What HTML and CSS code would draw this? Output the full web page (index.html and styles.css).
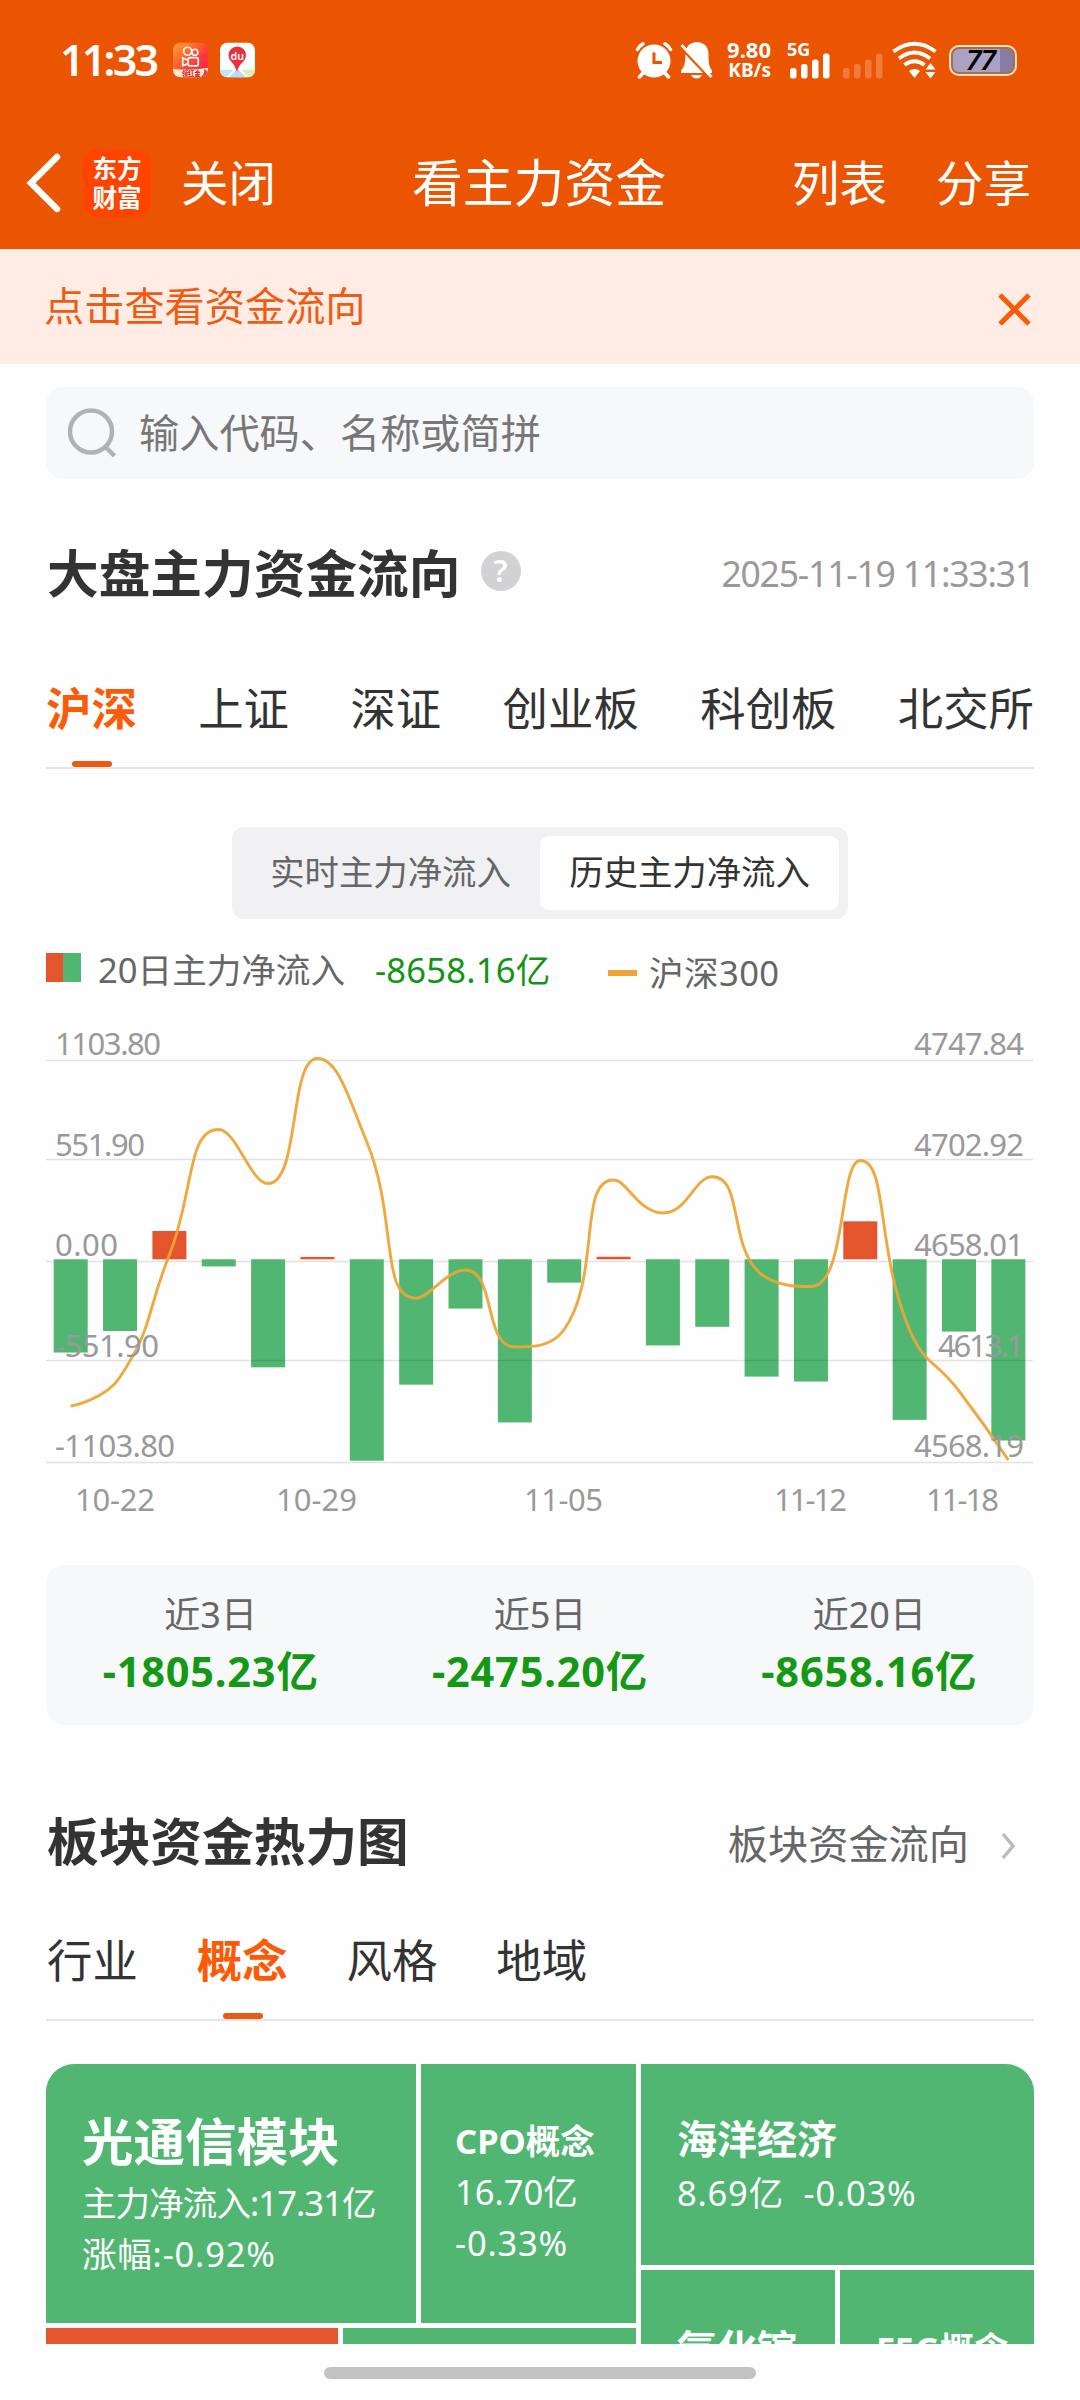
FILE: index.html
```html
<!DOCTYPE html>
<html lang="zh-CN">

<head>
    <meta charset="UTF-8">
    <meta name="viewport" content="width=device-width, initial-scale=1.0">
    <title>看主力资金</title>
    <link rel="stylesheet" href="styles.css">
</head>

<body>
    <header class="header">
        <div class="status">
            <div class="status-left">
                <span class="time">11:33</span>
                <svg class="app-icon" viewBox="0 0 36 36">
                    <defs>
                        <linearGradient id="ks" x1="0" y1="0" x2="1" y2="1">
                            <stop offset="0" stop-color="#ffa726" />
                            <stop offset=".6" stop-color="#ff3b3b" />
                            <stop offset="1" stop-color="#f0244c" />
                        </linearGradient>
                        <clipPath id="round"><rect width="36" height="36" rx="8" /></clipPath>
                    </defs>
                    <g clip-path="url(#round)">
                        <rect width="36" height="36" fill="url(#ks)" />
                        <g fill="none" stroke="#fff" stroke-width="1.7">
                            <circle cx="15" cy="9" r="4.1" />
                            <circle cx="22.5" cy="10" r="3.1" />
                            <rect x="15.5" y="15.5" width="10.5" height="8.5" rx="2.2" />
                            <path d="M15 18l-5-2v8l5-2" />
                        </g>
                        <path d="M0 27q18 2.5 36-1v10H0z" fill="#ffe9cf" />
                        <text x="9" y="34.5" class="app-tag">领红金</text>
                        <path d="M28 36q5-3 4-9 5 2 4 9z" fill="#f33b3b" />
                    </g>
                </svg>
                <svg class="app-icon" viewBox="0 0 36 36">
                    <g clip-path="url(#round)">
                        <rect width="36" height="36" fill="#fff" />
                        <path d="M0 28h14L6 36H0z" fill="#bfe3f7" />
                        <path d="M18 27l9 9H9z" fill="#b9dcf5" />
                        <path d="M22 28h14v8h-6z" fill="#d9efb8" />
                        <path d="M17.500 30Q16 24 11.500 19.500A9 9 0 1 1 24 19.500Q19 24 17.500 30z" fill="#e8303a" />
                        <text x="17.800" y="17.500" class="app-du">du</text>
                    </g>
                </svg>
            </div>
            <div class="status-right">
                <svg class="alarm" width="38" height="38" viewBox="0 0 38 38">
                    <circle cx="19" cy="20" r="16.500" fill="#fff" />
                    <g fill="none" stroke="#fff" stroke-width="3.500" stroke-linecap="round">
                        <path d="M2.500 8.500Q4.500 5 8 2.800M35.500 8.500Q33.500 5 30 2.800M8 32l-3.500 4M30 32l3.500 4" />
                    </g>
                    <path d="M19 11.500v10h8" fill="none" stroke="#eb5502" stroke-width="3" />
                </svg>
                <svg class="bell" width="34" height="38" viewBox="0 0 34 38">
                    <path d="M17 1C10 1 5.500 6 5.500 12.500c0 9-1 13-4.500 17V32h31v-2.500C29 26 28.500 21 28.500 12.500 28.500 6 24 1 17 1zM11 34h11q-2 3.500-5.500 3.500T11 34z" fill="#fff" />
                    <path d="M-1 4L30 37" stroke="#eb5502" stroke-width="3.500" />
                    <path d="M1.500 4L31.500 36" stroke="#fff" stroke-width="2.800" />
                </svg>
                <div class="speed"><span>9.80</span><span>KB/s</span></div>
                <svg class="signal" width="90" height="38" viewBox="0 0 90 38">
                    <text x="0" y="14.500" class="net">5G</text>
                    <g fill="#fff">
                        <rect x="3" y="27" width="6.500" height="10.500" rx="2.500" />
                        <rect x="14" y="23" width="6.500" height="14.500" rx="2.500" />
                        <rect x="25" y="18.500" width="6.500" height="19" rx="2.500" />
                        <rect x="36" y="12.500" width="6.500" height="25" rx="2.500" />
                    </g>
                    <g fill="#f27a3a">
                        <rect x="56" y="27" width="6.500" height="10.500" rx="2.500" />
                        <rect x="67" y="23" width="6.500" height="14.500" rx="2.500" />
                        <rect x="78" y="18.500" width="6.500" height="19" rx="2.500" />
                    </g>
                </svg>
                <svg class="signal-end" width="7" height="38" viewBox="0 0 7 38">
                    <rect x="0" y="12.500" width="6.500" height="25" rx="2.500" fill="#f27a3a" />
                </svg>
                <svg class="wifi" width="46" height="38" viewBox="0 0 46 38">
                    <g fill="none" stroke="#fff" stroke-width="4">
                        <path d="M1.500 10.500Q22.500-5 43.500 10.500" />
                        <path d="M7 17.500Q22.500 5.500 38 17.500" />
                        <path d="M12.500 24Q22.500 16.500 32.500 24" />
                    </g>
                    <path d="M17 30q5.500-4 11 0l-5.500 7z" fill="#fff" />
                    <path d="M38.500 22l5 6.500h-10zM38.500 37.500l5-6.500h-10z" fill="#fff" />
                </svg>
                <div class="battery"><div class="battery-body">77</div></div>
            </div>
        </div>
        <nav class="nav">
            <svg class="back" width="36" height="60" viewBox="0 0 36 60">
                <path d="M31 4L5 30l26 26" fill="none" stroke="#fff" stroke-width="6.500" stroke-linecap="round" />
            </svg>
            <div class="logo"><span>东方</span><span>财富</span></div>
            <span class="close-page">关闭</span>
            <span class="nav-title">看主力资金</span>
            <span class="nav-list">列表</span>
            <span class="nav-share">分享</span>
        </nav>
    </header>

    <div class="notice">
        <span>点击查看资金流向</span>
        <svg width="34" height="34" viewBox="0 0 34 34">
            <path d="M2 2l29 29M31 2L2 31" stroke="#fb5a07" stroke-width="5" />
        </svg>
    </div>

    <main class="main">
        <div class="search">
            <svg width="48" height="50" viewBox="0 0 48 50">
                <circle cx="23" cy="23.500" r="21" fill="none" stroke="#b2b2b2" stroke-width="4.500" />
                <path d="M37 38.500l9.500 9.500" stroke="#b2b2b2" stroke-width="4.500" />
            </svg>
            <span>输入代码、名称或简拼</span>
        </div>

        <div class="section-head market-head">
            <h2>大盘主力资金流向</h2>
            <span class="help">?</span>
            <span class="date">2025-11-19 11:33:31</span>
        </div>

        <div class="tabs market-tabs">
            <span class="tab active">沪深</span>
            <span class="tab">上证</span>
            <span class="tab">深证</span>
            <span class="tab">创业板</span>
            <span class="tab">科创板</span>
            <span class="tab">北交所</span>
        </div>

        <div class="segment">
            <span class="seg">实时主力净流入</span>
            <span class="seg seg-on">历史主力净流入</span>
        </div>

        <div class="legend">
            <i class="swatch"></i>
            <span class="legend-name">20日主力净流入</span>
            <span class="legend-value">-8658.16亿</span>
            <i class="dash"></i>
            <span class="legend-index">沪深300</span>
        </div>

        <svg class="chart" width="988" height="500" viewBox="0 0 988 500">
            <path class="grid" d="M0 241.500H987" />
            <g id="bars"></g>
            <path class="grid" d="M0 40.500H987M0 139.500H987M0 340.500H987M0 442.500H987" />
            <path id="line" class="line" />
            <g class="axis">
                <text x="9" y="34.500" textLength="106">1103.80</text>
                <text x="9" y="136" textLength="90">551.90</text>
                <text x="9" y="235.500" textLength="63">0.00</text>
                <text x="9" y="337" textLength="104">-551.90</text>
                <text x="9" y="437" textLength="120">-1103.80</text>
            </g>
            <g class="axis">
                <text x="868" y="34.500" textLength="110">4747.84</text>
                <text x="868" y="136" textLength="110">4702.92</text>
                <text x="868" y="235.500" textLength="110">4658.01</text>
                <text x="892" y="337" textLength="86">4613.1</text>
                <text x="868" y="437" textLength="110">4568.19</text>
            </g>
            <g class="axis">
                <text x="29" y="491" textLength="80">10-22</text>
                <text x="230" y="491" textLength="81">10-29</text>
                <text x="478" y="491" textLength="79">11-05</text>
                <text x="728" y="491" textLength="73">11-12</text>
                <text x="880" y="491" textLength="73">11-18</text>
            </g>
        </svg>

        <div class="summary">
            <div class="sum-item"><span>近3日</span><b>-1805.23亿</b></div>
            <div class="sum-item"><span>近5日</span><b>-2475.20亿</b></div>
            <div class="sum-item"><span>近20日</span><b>-8658.16亿</b></div>
        </div>

        <div class="section-head heat-head">
            <h2>板块资金热力图</h2>
            <span class="more">板块资金流向</span>
            <svg class="arrow" width="16" height="28" viewBox="0 0 16 28">
                <path d="M3 2l10 12L3 26" fill="none" stroke="#bbb" stroke-width="3.500" />
            </svg>
        </div>

        <div class="tabs heat-tabs">
            <span class="tab">行业</span>
            <span class="tab active">概念</span>
            <span class="tab">风格</span>
            <span class="tab">地域</span>
        </div>

        <div class="heatmap">
            <div class="heat-left">
                <div class="heat-row">
                    <div class="cell cell-xl">
                        <strong>光通信模块</strong>
                        <span>主力净流入:17.31亿</span>
                        <span class="rate">涨幅:-0.92%</span>
                    </div>
                    <div class="cell cell-cpo">
                        <strong>CPO概念</strong>
                        <span>16.70亿</span>
                        <span class="rate">-0.33%</span>
                    </div>
                </div>
                <div class="heat-row">
                    <div class="cell cell-up"></div>
                    <div class="cell cell-rest"></div>
                </div>
            </div>
            <div class="heat-right">
                <div class="cell cell-sea">
                    <strong>海洋经济</strong>
                    <span class="rate">8.69亿&nbsp; -0.03%</span>
                </div>
                <div class="heat-row">
                    <div class="cell cell-half"><strong>氧化镓</strong></div>
                    <div class="cell cell-half cell-f5g"><strong>F5G概念</strong></div>
                </div>
            </div>
        </div>
    </main>

    <div class="home-bar"></div>

    <script src="chart.js"></script>
</body>

</html>
```
FILE: styles.css
```css
* {
    box-sizing: border-box;
}

body {
    margin: 0;
    width: 1080px;
    height: 2400px;
    overflow: hidden;
    background: #fefefe;
    color: #333;
    font-family: "Noto Sans", "Noto Sans CJK SC", sans-serif;
    white-space: nowrap;
}

svg {
    display: block;
    flex: none;
}

/* 顶部 */
.header {
    height: 249px;
    background: #eb5502;
    color: #fff;
}

.status {
    display: flex;
    justify-content: space-between;
    height: 120px;
    padding: 0 63px 0 60px;
}

.status-left,
.status-right {
    display: flex;
    align-items: center;
}

.time {
    width: 113px;
    font-size: 43px;
    font-weight: 600;
    line-height: 60px;
    letter-spacing: -2.8px;
}

.app-icon {
    width: 35px;
    height: 36px;
    margin-right: 12px;
}

.app-tag {
    font-size: 6.5px;
    font-weight: 700;
    fill: #c4161c;
}

.app-du {
    font-size: 11px;
    font-weight: 600;
    fill: #fff;
    text-anchor: middle;
}

.bell {
    margin-left: 7px;
}

.speed {
    display: flex;
    flex-direction: column;
    width: 46px;
    margin: 0 16px 0 11px;
    font-size: 22px;
    font-weight: 700;
    line-height: 21px;
    text-align: right;
}

.speed span + span {
    font-size: 19px;
}

.net {
    font-size: 18px;
    font-weight: 700;
    fill: #fff;
}

.signal {
    margin-right: -1px;
    overflow: visible;
}

.wifi {
    margin-left: 9px;
}

.battery {
    width: 68px;
    height: 31px;
    margin-left: 11px;
    padding: 2px;
    border: 2px solid #ffe6c0;
    border-radius: 10px;
    background: #b0694a;
}

.battery-body {
    height: 100%;
    border-radius: 6px;
    background: linear-gradient(90deg, #aaa2c5 78%, #857da3 78%);
    color: #000;
    font-family: Inter, sans-serif;
    font-size: 27px;
    font-style: italic;
    font-weight: 600;
    line-height: 23px;
    padding-left: 13px;
    letter-spacing: -1.5px;
}

.nav {
    display: flex;
    align-items: center;
    height: 125px;
    padding-left: 26px;
    font-size: 47.5px;
    line-height: 60px;
}

.logo {
    display: flex;
    flex-direction: column;
    align-items: center;
    justify-content: center;
    width: 68px;
    height: 68px;
    margin-left: 21px;
    border-radius: 14px;
    background: #ff4400;
    font-size: 24.5px;
    font-weight: 700;
    line-height: 29px;
}

.close-page {
    width: 231px;
    margin-left: 30px;
}

.nav-title {
    width: 380px;
    font-size: 50.8px;
}

.nav-list {
    width: 144px;
}

/* 提示条 */
.notice {
    display: flex;
    justify-content: space-between;
    height: 115px;
    padding: 28px 48px 0 44px;
    background: #ffede5;
    color: #ee5c14;
    font-size: 40.2px;
    line-height: 58px;
}

.notice svg {
    margin-top: 16px;
}

.main {
    height: 1980px;
    padding: 23px 46px 0;
    overflow: hidden;
}

.search {
    display: flex;
    align-items: center;
    height: 92px;
    padding-left: 22px;
    border-radius: 17px;
    background: #f7f8fa;
    color: #777;
    font-size: 40.2px;
    line-height: 60px;
}

.search span {
    margin-left: 23px;
}

.section-head {
    display: flex;
    align-items: center;
    height: 70px;
}

.section-head h2 {
    margin: 0 0 0 1px;
    font-size: 51.7px;
    font-weight: 700;
    line-height: 70px;
}

.market-head {
    margin-top: 59px;
}

.help {
    width: 40px;
    height: 40px;
    margin: -4px 0 0 20px;
    border-radius: 50%;
    background: #d2d2d4;
    color: #fff;
    font-size: 30px;
    font-weight: 600;
    line-height: 40px;
    text-align: center;
}

.date {
    margin-left: auto;
    color: #999;
    font-size: 35.5px;
    letter-spacing: -1.2px;
}

.tabs {
    display: flex;
    border-bottom: 2px solid #e6e6e6;
    font-size: 45.4px;
    line-height: 66px;
}

.market-tabs {
    justify-content: space-between;
    height: 94px;
    margin-top: 67px;
}

.tab {
    position: relative;
}

.active {
    color: #fb5a07;
    font-weight: 700;
}

.active::after {
    content: "";
    position: absolute;
    left: 50%;
    bottom: 0;
    width: 40px;
    height: 6px;
    margin-left: -19px;
    border-radius: 3px;
    background: #eb5a14;
}

/* 切换 */
.segment {
    display: flex;
    width: 616px;
    height: 92px;
    margin: 58px auto 0;
    padding: 9px;
    border-radius: 12px;
    background: #f1f1f4;
    font-size: 34.4px;
    line-height: 72px;
    text-align: center;
}

.seg {
    flex: 1;
    color: #666;
}

.seg-on {
    border-radius: 9px;
    background: #fff;
    color: #333;
}

.legend {
    display: flex;
    align-items: center;
    height: 60px;
    margin-top: 21px;
    color: #666;
    font-size: 34.6px;
    line-height: 60px;
}

.swatch {
    width: 35px;
    height: 29px;
    margin-top: -5px;
    background: linear-gradient(90deg, #e5552d 48%, #51b672 48%);
}

.legend-name {
    width: 277px;
    margin-left: 17px;
}

.legend-value {
    width: 233px;
    color: #149414;
    letter-spacing: 0.2px;
}

.dash {
    width: 29px;
    height: 6px;
    margin-top: 6px;
    background: #eda536;
}

.legend-index {
    margin: 6px 0 0 12px;
    letter-spacing: 0.4px;
}

/* 图表 */
.chart {
    margin-top: 20px;
}

.grid {
    stroke: rgba(0, 0, 0, 0.11);
    stroke-width: 1.4;
}

.bar-up {
    fill: #e5552d;
}

.bar-down {
    fill: #51b672;
}

.line {
    fill: none;
    stroke: #eda536;
    stroke-width: 2.9;
    opacity: 0.95;
}

.axis {
    fill: #999;
    font-size: 31px;
}

.summary {
    display: grid;
    grid-template-columns: repeat(3, 1fr);
    height: 160px;
    margin-top: 45px;
    padding-top: 22px;
    border-radius: 19px;
    background: #f7f8fa;
}

.sum-item {
    display: flex;
    flex-direction: column;
    align-items: center;
    color: #666;
    font-size: 36px;
    line-height: 56px;
}

.sum-item b {
    color: #149914;
    font-size: 41.5px;
    letter-spacing: 0.8px;
}

/* 热力图 */
.heat-head {
    margin-top: 81px;
}

.more {
    margin-left: auto;
    color: #666;
    font-size: 40.2px;
}

.arrow {
    margin: 10px 18px 0 31px;
}

.heat-tabs {
    gap: 59px;
    height: 94px;
    margin-top: 51px;
    padding-left: 1px;
}

.heatmap {
    display: flex;
    gap: 5px;
    height: 500px;
    margin-top: 43px;
    border-radius: 28px;
    overflow: hidden;
}

.heat-left {
    width: 590px;
}

.heat-right {
    width: 393px;
}

.heat-row {
    display: flex;
    gap: 5px;
    margin-bottom: 5px;
}

.cell {
    display: flex;
    flex-direction: column;
    height: 259px;
    background: #51b672;
    color: #fff;
    font-size: 34.5px;
    line-height: 51px;
    padding-left: 36px;
}

.cell-xl {
    width: 370px;
    padding-top: 41px;
}

.cell-xl strong {
    font-size: 51.5px;
    line-height: 72px;
}

.cell-xl span {
    letter-spacing: -0.9px;
}

.cell .rate {
    letter-spacing: 0.8px;
}

.cell-cpo {
    width: 215px;
    padding-top: 51px;
    padding-left: 34px;
}

.cell-up {
    width: 292px;
    background: #e5552d;
}

.cell-rest {
    width: 293px;
}

.cell-sea {
    height: 201px;
    margin-bottom: 5px;
    padding-top: 46px;
}

.cell-sea strong,
.cell-half strong {
    font-size: 40px;
    line-height: 57px;
}

.cell-half {
    width: 194px;
    padding-top: 50px;
}

.cell-half.cell-f5g strong {
    font-size: 34.5px;
}

.home-bar {
    width: 432px;
    height: 12px;
    margin: 23px auto 0;
    border-radius: 6px;
    background: #c2c2c2;
}
```
FILE: chart.js
```js
const flows = [-511, -393, 155, -39, -592, 13, -1103.8, -687, -270, -894,
    -128, 14, -472, -370, -643, -670, 208, -880, -396, -993];
const closes = [386, 357, 234.8, 109.5, 163.5, 38.5, 122, 278.2, 250, 327,
    309.5, 160, 193, 156.7, 254.5, 266.5, 140.5, 310, 371, 440];

const step = 49.35;
const zero = 239.3;
const scale = 201.4 / 1103.8;

let bars = '';
flows.forEach((value, i) => {
    const x = 24.7 + step * i - 17;
    const h = Math.abs(value) * scale;
    const y = value > 0 ? zero - h : zero;
    bars += `<rect class="${value > 0 ? 'bar-up' : 'bar-down'}" x="${x}" y="${y}" width="34" height="${h}" />`;
});
document.getElementById('bars').innerHTML = bars;

const clamp = (v, a, b) => Math.max(Math.min(a, b), Math.min(Math.max(a, b), v));

// smooth curve, control points never leave the box between two neighbours
function smoothPath(pts, smooth) {
    let d = `M${pts[0]}`;
    let out = pts[0];
    for (let i = 1; i < pts.length; i++) {
        const prev = pts[i - 1], p = pts[i], next = pts[i + 1];
        let cpIn = p, cpOut = p;
        if (next) {
            const lenPrev = Math.hypot(p[0] - prev[0], p[1] - prev[1]);
            const lenNext = Math.hypot(next[0] - p[0], next[1] - p[1]);
            const ratio = lenNext / (lenNext + lenPrev);
            cpOut = p.map((c, k) => clamp(c + (next[k] - prev[k]) * smooth * ratio, c, next[k]));
            cpIn = p.map((c, k) => clamp(c - (cpOut[k] - c) * lenPrev / lenNext, c, prev[k]));
            cpOut = p.map((c, k) => c + (c - cpIn[k]) * lenNext / lenPrev);
        }
        d += `C${out} ${cpIn} ${p}`;
        out = cpOut;
    }
    return d;
}

const points = closes.map((y, i) => [24.7 + step * i, y]);
document.getElementById('line').setAttribute('d', smoothPath(points, 0.5));
```
